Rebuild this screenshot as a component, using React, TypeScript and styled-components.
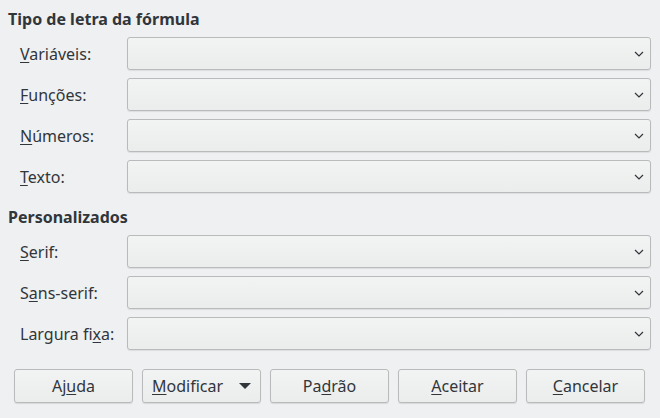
import React from 'react';
import styled, { createGlobalStyle } from 'styled-components';

const GlobalStyle = createGlobalStyle`
  html, body {
    margin: 0;
    padding: 0;
    background: #eff0f1;
  }
  body {
    font-family: "Noto Sans", "DejaVu Sans", sans-serif;
    font-size: 16px;
    color: #31363b;
  }
`;

const Dialog = styled.div`
  width: 660px;
  height: 418px;
  box-sizing: border-box;
  padding: 8px 9px 0 8px;
  display: flex;
  flex-direction: column;
  background: #eff0f1;
`;

const SectionTitle = styled.div<{ $gapTop?: number }>`
  font-weight: 700;
  font-size: 16px;
  line-height: 22px;
  margin-top: ${p => p.$gapTop ?? 0}px;
  margin-bottom: 7px;
`;

const Rows = styled.div`
  display: flex;
  flex-direction: column;
  gap: 8px;
`;

const Row = styled.div`
  display: grid;
  grid-template-columns: 107px 1fr;
  align-items: center;
  padding-left: 12px;
`;

const Label = styled.label`
  font-size: 16px;
  line-height: 22px;
  white-space: nowrap;
`;

const Mnemonic = styled.span`
  text-decoration: underline;
  text-underline-offset: 2px;
  text-decoration-thickness: 1px;
`;

const Combo = styled.div`
  height: 33px;
  box-sizing: border-box;
  border: 1px solid #b9babc;
  border-radius: 3px;
  background: linear-gradient(#f2f3f3, #ebecec);
  box-shadow: 0 1px 1px rgba(0, 0, 0, 0.08);
  display: flex;
  align-items: center;
  justify-content: flex-end;
  padding-right: 6px;
`;

const ButtonBar = styled.div`
  display: flex;
  gap: 9px;
  margin-top: 19px;
  padding-left: 6px;
`;

const Button = styled.button`
  width: 119px;
  height: 34px;
  box-sizing: border-box;
  border: 1px solid #b9babc;
  border-radius: 3px;
  background: linear-gradient(#f2f3f3, #ebecec);
  box-shadow: 0 1px 1px rgba(0, 0, 0, 0.1);
  font-family: "Noto Sans", "DejaVu Sans", sans-serif;
  font-size: 16px;
  color: #31363b;
  display: flex;
  align-items: center;
  justify-content: center;
  gap: 16px;
  padding: 0;
  cursor: pointer;
`;

const Chevron = () => (
  <svg width="10" height="6" viewBox="0 0 10 6">
    <polyline points="1,1 5,5 9,1" fill="none" stroke="#31363b" strokeWidth="1.2" />
  </svg>
);

const DropArrow = () => (
  <svg width="12" height="6" viewBox="0 0 12 6">
    <polygon points="0,0 12,0 6,6" fill="#31363b" />
  </svg>
);

interface FieldProps {
  pre?: string;
  key_: string;
  post: string;
}

const Field: React.FC<FieldProps> = ({ pre = '', key_, post }) => (
  <Row>
    <Label>
      {pre}
      <Mnemonic>{key_}</Mnemonic>
      {post}
    </Label>
    <Combo>
      <Chevron />
    </Combo>
  </Row>
);

export default function App() {
  return (
    <>
      <GlobalStyle />
      <Dialog>
        <SectionTitle>Tipo de letra da fórmula</SectionTitle>
        <Rows>
          <Field key_="V" post="ariáveis:" />
          <Field key_="F" post="unções:" />
          <Field key_="N" post="úmeros:" />
          <Field key_="T" post="exto:" />
        </Rows>

        <SectionTitle $gapTop={13}>Personalizados</SectionTitle>
        <Rows>
          <Field key_="S" post="erif:" />
          <Field pre="S" key_="a" post="ns-serif:" />
          <Field pre="Largura fi" key_="x" post="a:" />
        </Rows>

        <ButtonBar>
          <Button>
            <span>Aj<Mnemonic>u</Mnemonic>da</span>
          </Button>
          <Button>
            <span><Mnemonic>M</Mnemonic>odificar</span>
            <DropArrow />
          </Button>
          <Button>
            <span>Pa<Mnemonic>d</Mnemonic>rão</span>
          </Button>
          <Button>
            <span><Mnemonic>A</Mnemonic>ceitar</span>
          </Button>
          <Button>
            <span><Mnemonic>C</Mnemonic>ancelar</span>
          </Button>
        </ButtonBar>
      </Dialog>
    </>
  );
}
